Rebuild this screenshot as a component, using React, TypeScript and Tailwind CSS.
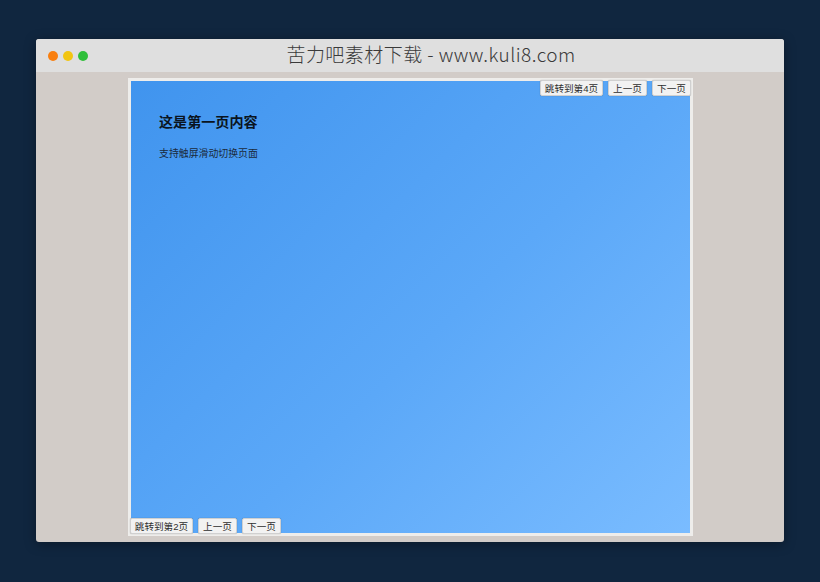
const cjk = "font-['Liberation_Sans','Noto_Sans_CJK_SC',sans-serif]";

function PageButton({ label, className = "" }: { label: string; className?: string }) {
  return (
    <button className={`h-[16px] rounded-[2px] border border-[#d0d0d0] bg-[#f2f2f2] pt-[1px] text-[9.6px] leading-[14px] text-[#2e2e2e] shadow-[0_0_1px_rgba(0,0,0,0.35)] ${className}`}>
      {label}
    </button>
  );
}

function Dot({ color }: { color: string }) {
  return <span className={`h-[10px] w-[10px] rounded-full ${color}`} />;
}

export default function App() {
  return (
    <div className={`h-[582px] w-[820px] overflow-hidden bg-[#10263f] pl-[36px] pt-[39px] ${cjk}`}>
      <div className="flex h-[503px] w-[748px] flex-col overflow-hidden rounded-[3px] bg-[#d2ccc8] shadow-[0_2px_12px_rgba(0,0,0,0.35)]">
        {/* Title bar */}
        <div className="relative flex h-[33px] shrink-0 items-center bg-[#dfdfdf] pl-[12px]">
          <div className="flex items-center gap-[5px]">
            <Dot color="bg-[#f97f0f]" />
            <Dot color="bg-[#f2c511]" />
            <Dot color="bg-[#2fbf3a]" />
          </div>
          <div className="absolute inset-0 flex items-center justify-center pb-[3px] pl-[42px] font-['Noto_Sans_CJK_SC',sans-serif] text-[19px] font-light tracking-[0.45px] text-[#3a3a3a]">
            苦力吧素材下载 - www.kuli8.com
          </div>
        </div>

        {/* Slider panel */}
        <div className="relative ml-[92px] mt-[6px] h-[458px] w-[565px] bg-[#eeedeb] p-[3px]">
          <div className="h-full w-full bg-[linear-gradient(135deg,#4094ee_0%,#5ba8f8_55%,#7abcff_100%)] pl-[28px] pt-[32px]">
            <h1 className="text-[14.1px] font-bold leading-[18px] text-[#0a1420]">这是第一页内容</h1>
            <p className="mt-[16px] text-[9.9px] leading-[14px] text-[#1a2a3c]">支持触屏滑动切换页面</p>
          </div>

          <div className="absolute right-[2px] top-[2px] flex gap-[5px]">
            <PageButton label="跳转到第4页" className="w-[63px]" />
            <PageButton label="上一页" className="w-[39px]" />
            <PageButton label="下一页" className="w-[39px]" />
          </div>

          <div className="absolute bottom-[2px] left-[2px] flex gap-[5px]">
            <PageButton label="跳转到第2页" className="w-[63px]" />
            <PageButton label="上一页" className="w-[39px]" />
            <PageButton label="下一页" className="w-[39px]" />
          </div>
        </div>
      </div>
    </div>
  );
}
